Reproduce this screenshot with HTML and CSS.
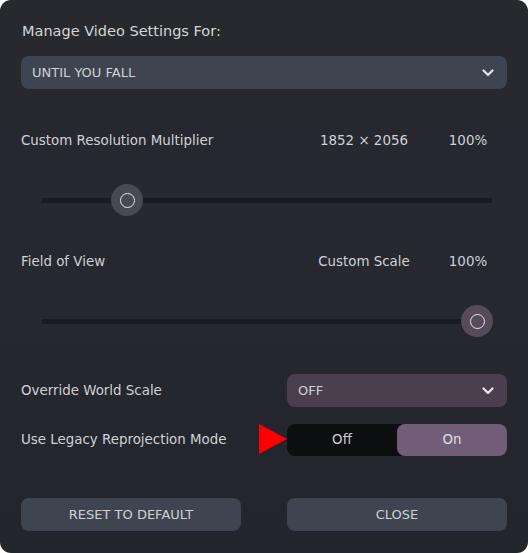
FILE: index.html
```html
<!DOCTYPE html>
<html>
<head>
<meta charset="utf-8">
<link rel="stylesheet" href="styles.css">
</head>
<body>
<div class="panel">
  <div class="title">Manage Video Settings For:</div>
  <div class="select select-wide">
    <span>UNTIL YOU FALL</span>
    <svg class="chev" width="12" height="8" viewBox="0 0 12 8"><path d="M1.5 1.5 L6 6 L10.5 1.5" fill="none" stroke="#e4e5e8" stroke-width="2.2" stroke-linecap="round" stroke-linejoin="round"/></svg>
  </div>

  <div class="row row-res">
    <span class="label">Custom Resolution Multiplier</span>
    <span class="val">1852 × 2056</span>
    <span class="pct">100%</span>
  </div>
  <div class="slider">
    <div class="track"></div>
    <div class="thumb" style="left: 85px"><div class="ring"></div></div>
  </div>

  <div class="row row-fov">
    <span class="label">Field of View</span>
    <span class="val">Custom Scale</span>
    <span class="pct">100%</span>
  </div>
  <div class="slider slider-fov">
    <div class="track"></div>
    <div class="thumb thumb-purple" style="left: 435px"><div class="ring"></div></div>
  </div>

  <div class="row row-ctrl row-world">
    <span class="label">Override World Scale</span>
    <div class="select select-purple">
      <span>OFF</span>
      <svg class="chev" width="12" height="8" viewBox="0 0 12 8"><path d="M1.5 1.5 L6 6 L10.5 1.5" fill="none" stroke="#e4e5e8" stroke-width="2.2" stroke-linecap="round" stroke-linejoin="round"/></svg>
    </div>
  </div>

  <div class="row row-ctrl row-legacy">
    <span class="label">Use Legacy Reprojection Mode</span>
    <div class="toggle">
      <div class="arrow"></div>
      <div class="opt opt-off">Off</div>
      <div class="opt opt-on">On</div>
    </div>
  </div>

  <div class="buttons">
    <div class="btn">RESET TO DEFAULT</div>
    <div class="btn">CLOSE</div>
  </div>
</div>
</body>
</html>
```

FILE: styles.css
```css
html, body {
  margin: 0;
  padding: 0;
  background: #ffffff;
}
body {
  font-family: "DejaVu Sans", sans-serif;
  color: #cfd1d5;
}
.panel {
  width: 528px;
  height: 553px;
  box-sizing: border-box;
  padding: 0 21px;
  border-radius: 11px;
  background: linear-gradient(180deg, #28292e 0%, #272830 40%, #23252d 100%);
  display: flex;
  flex-direction: column;
}
.title {
  margin-top: 21px;
  padding-left: 1px;
  height: 20px;
  line-height: 20px;
  font-size: 14.5px;
  color: #d4d5d8;
}
.select {
  height: 33px;
  border-radius: 8px;
  background: #3e4450;
  display: flex;
  align-items: center;
  justify-content: space-between;
  padding: 0 13px 0 11px;
  box-sizing: border-box;
  font-size: 13px;
  color: #d0d2d6;
}
.select-wide {
  margin-top: 15px;
}
.select-purple {
  background: #4b3f4f;
  width: 220px;
}
.row {
  display: flex;
  align-items: center;
  font-size: 13.4px;
  height: 20px;
  line-height: 20px;
}
.label {
  flex: 1;
}
.val {
  width: 110px;
  text-align: center;
}
.pct {
  width: 70px;
  margin-left: 14px;
  margin-right: 4px;
  text-align: center;
}
.row-res { margin-top: 42px; }
.row-fov { margin-top: 32px; }
.slider {
  margin-top: 29px;
  height: 40px;
  position: relative;
  margin-left: 21px;
  margin-right: 15px;
}
.track {
  position: absolute;
  left: 0;
  right: 0;
  top: 18px;
  height: 5px;
  background: #191a22;
}
.thumb {
  position: absolute;
  top: 4px;
  width: 32px;
  height: 32px;
  margin-left: -16px;
  border-radius: 50%;
  background: #474a53;
  display: flex;
  align-items: center;
  justify-content: center;
}
.thumb-purple {
  background: #574a5a;
}
.ring {
  width: 13px;
  height: 13px;
  border: 1.5px solid #e6e6ea;
  border-radius: 50%;
}
.row-ctrl {
  height: 33px;
}
.row-world { margin-top: 33px; }
.row-legacy { margin-top: 17px; height: 32px; }
.toggle {
  position: relative;
  width: 220px;
  height: 32px;
  display: flex;
  border-radius: 8px;
  background: #0d0e10;
}
.arrow {
  position: absolute;
  right: 100%;
  top: 0;
  width: 0;
  height: 0;
  border-top: 15px solid transparent;
  border-bottom: 15px solid transparent;
  border-left: 28px solid #ff0000;
}
.opt {
  flex: 1;
  display: flex;
  align-items: center;
  justify-content: center;
  font-size: 13.4px;
  border-radius: 8px;
}
.opt-off {
  color: #cfcfd2;
}
.opt-on {
  background: #725d79;
  color: #e2dde4;
}
.buttons {
  margin-top: 42px;
  display: flex;
  justify-content: space-between;
}
.btn {
  width: 220px;
  height: 33px;
  border-radius: 8px;
  background: #3e4450;
  display: flex;
  align-items: center;
  justify-content: center;
  font-size: 13px;
  color: #cfd1d5;
}
```
